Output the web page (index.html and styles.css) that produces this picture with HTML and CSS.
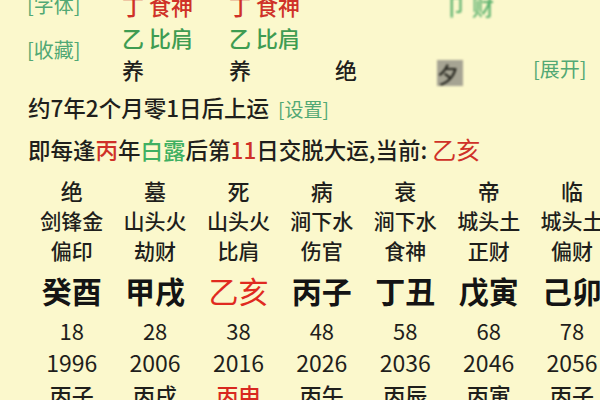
FILE: index.html
```html
<!DOCTYPE html>
<html lang="zh">
<head>
<meta charset="utf-8">
<link rel="stylesheet" href="styles.css">
</head>
<body>
<div class="page">
  <div class="top">
    <div class="link l-font">[字体]</div>
    <div class="cell red c1 r1">丁 食神</div>
    <div class="cell red c2 r1">丁 食神</div>
    <div class="cell green c4 r1 blurred">卩 财</div>
    <div class="link l-fav">[收藏]</div>
    <div class="cell green c1 r2">乙 比肩</div>
    <div class="cell green c2 r2">乙 比肩</div>
    <div class="cell c1 r3">养</div>
    <div class="cell c2 r3">养</div>
    <div class="cell c3 r3">绝</div>
    <div class="cell c4 r3"><span class="mosaic">夕</span></div>
    <div class="link c5 r3">[展开]</div>
  </div>

  <div class="line l1">约7年2个月零1日后上运 <span class="set">[设置]</span></div>
  <div class="line l2">即每逢<span class="red">丙</span>年<span class="green2">白露</span>后第<span class="red">11</span>日交脱大运,当前: <span class="red big">乙亥</span></div>

  <div class="table">
    <div class="row r-state"><span>绝</span><span>墓</span><span>死</span><span>病</span><span>衰</span><span>帝</span><span>临</span></div>
    <div class="row r-nayin"><span>剑锋金</span><span>山头火</span><span>山头火</span><span>涧下水</span><span>涧下水</span><span>城头土</span><span>城头土</span></div>
    <div class="row r-god"><span>偏印</span><span>劫财</span><span>比肩</span><span>伤官</span><span>食神</span><span>正财</span><span>偏财</span></div>
    <div class="row r-gz"><span>癸酉</span><span>甲戌</span><span class="hot">乙亥</span><span>丙子</span><span>丁丑</span><span>戊寅</span><span>己卯</span></div>
    <div class="row r-age"><span>18</span><span>28</span><span>38</span><span>48</span><span>58</span><span>68</span><span>78</span></div>
    <div class="row r-year"><span>1996</span><span>2006</span><span>2016</span><span>2026</span><span>2036</span><span>2046</span><span>2056</span></div>
    <div class="row r-ly"><span>丙子</span><span>丙戌</span><span class="hot2">丙申</span><span>丙午</span><span>丙辰</span><span>丙寅</span><span>丙子</span></div>
  </div>
</div>
</body>
</html>
```

FILE: styles.css
```css
html, body {
  margin: 0;
  padding: 0;
  width: 600px;
  height: 400px;
  overflow: hidden;
  background: #fbf8cc;
}
body {
  font-family: "Noto Sans CJK SC", "Noto Sans", sans-serif;
  font-weight: 500;
  color: #1f1f1c;
}
.page {
  width: 600px;
  height: 400px;
  overflow: hidden;
}
.top {
  display: grid;
  grid-template-columns: 95px 107px 106px 105px 93px auto;
  grid-template-rows: 32px 32px 32px;
  margin-top: -11px;
  padding-left: 27px;
  font-size: 22px;
  line-height: 32px;
}
.cell { white-space: nowrap; }
.c1 { grid-column: 2; }
.c2 { grid-column: 3; }
.c3 { grid-column: 4; }
.c4 { grid-column: 5; }
.c5 { grid-column: 6; }
.r1 { grid-row: 1; }
.r2 { grid-row: 2; }
.r3 { grid-row: 3; }
.link {
  color: #52a874;
  font-size: 20px;
  font-weight: 400;
  white-space: nowrap;
}
.l-font { grid-column: 1; grid-row: 1; }
.l-fav {
  grid-column: 1;
  grid-row: 2 / span 2;
  align-self: start;
  margin-top: 17px;
  line-height: 24px;
}
.red { color: #cf3128; }
.green { color: #3f9c52; }
.green2 { color: #3fb062; }
.blurred {
  color: #58b06c;
  filter: blur(0.8px);
  padding-left: 5px;
}
.mosaic {
  display: inline-block;
  width: 26px;
  height: 26px;
  line-height: 26px;
  background: #a6a493;
  color: #2a2a22;
  filter: blur(1px);
  vertical-align: middle;
  margin-left: -3px;
}
.line {
  padding-left: 28px;
  font-size: 22.5px;
  line-height: 40px;
  white-space: nowrap;
}
.l1 { margin-top: 2px; }
.set {
  color: #52a874;
  font-size: 19px;
  font-weight: 400;
  margin-left: 4px;
}
.big { font-size: 24px; font-weight: 400; }
.table {
  margin-top: 6px;
  padding-left: 30px;
}
.row {
  display: grid;
  grid-template-columns: repeat(7, 83.4px);
  text-align: center;
  white-space: nowrap;
}
.r-state { font-size: 22px; line-height: 30px; }
.r-nayin { font-size: 21px; line-height: 30px; }
.r-god { font-size: 21px; line-height: 30px; }
.r-gz { font-size: 30px; font-weight: 700; line-height: 50px; color: #141414; }
.r-age { font-size: 22px; line-height: 31px; font-weight: 400; }
.r-year { font-size: 23px; line-height: 32px; font-weight: 400; }
.r-ly { font-size: 22px; line-height: 32px; }
.hot { color: #e02a20; font-weight: 400; }
.hot2 { color: #d8281f; }
```
